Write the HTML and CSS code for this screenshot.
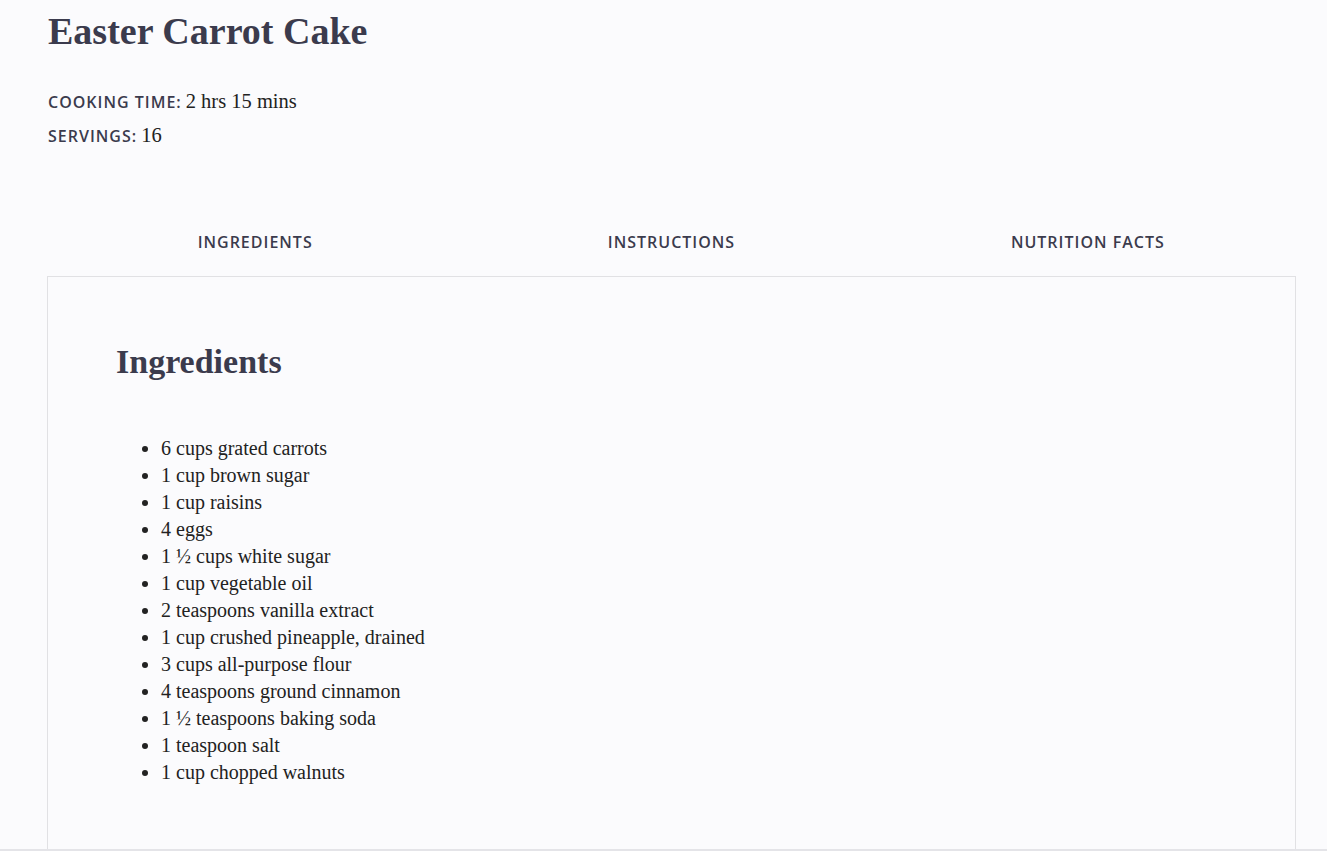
FILE: index.html
```html
<!DOCTYPE html>
<html lang="en">
<head>
<meta charset="utf-8">
<title>Easter Carrot Cake</title>
<link rel="stylesheet" href="styles.css">
</head>
<body>
<main class="recipe">
  <h1 class="recipe-title">Easter Carrot Cake</h1>
  <div class="meta">
    <p class="meta-row"><span class="meta-label">COOKING TIME:</span> <span class="meta-value">2 hrs 15 mins</span></p>
    <p class="meta-row"><span class="meta-label">SERVINGS:</span> <span class="meta-value">16</span></p>
  </div>
  <nav class="tabs">
    <div class="tab">INGREDIENTS</div>
    <div class="tab">INSTRUCTIONS</div>
    <div class="tab">NUTRITION FACTS</div>
  </nav>
  <section class="panel">
    <h2 class="panel-title">Ingredients</h2>
    <ul class="ingredients">
      <li>6 cups grated carrots</li>
      <li>1 cup brown sugar</li>
      <li>1 cup raisins</li>
      <li>4 eggs</li>
      <li>1 ½ cups white sugar</li>
      <li>1 cup vegetable oil</li>
      <li>2 teaspoons vanilla extract</li>
      <li>1 cup crushed pineapple, drained</li>
      <li>3 cups all-purpose flour</li>
      <li>4 teaspoons ground cinnamon</li>
      <li>1 ½ teaspoons baking soda</li>
      <li>1 teaspoon salt</li>
      <li>1 cup chopped walnuts</li>
    </ul>
  </section>
</main>
</body>
</html>
```

FILE: styles.css
```css
html, body {
  margin: 0;
  padding: 0;
  background: #fbfbfd;
}
body {
  color: #3b3b4d;
  font-family: "Liberation Serif", "Times New Roman", serif;
  overflow: hidden;
  height: 851px;
}
body::after {
  content: "";
  position: fixed;
  left: 0;
  right: 0;
  bottom: 0;
  height: 2px;
  background: #e4e4e8;
}
.recipe {
  width: 1249px;
  padding-left: 47px;
}
.recipe-title {
  margin: 0;
  padding-top: 8px;
  padding-left: 1px;
  font-family: "Liberation Serif", serif;
  font-size: 38px;
  font-weight: 700;
  line-height: 46px;
  color: #3b3b4d;
}
.meta {
  margin-top: 34px;
  padding-left: 1px;
}
.meta-row {
  margin: 0 0 8px;
  line-height: 26px;
}
.meta-row + .meta-row {
  margin-top: -2px;
}
.meta-label {
  font-family: "Open Sans", sans-serif;
  font-weight: 600;
  font-size: 16px;
  letter-spacing: 1px;
}
.meta-value {
  font-size: 20.5px;
  color: #222;
}
.tabs {
  display: grid;
  grid-template-columns: 1fr 1fr 1fr;
  margin-top: 71px;
}
.tab {
  text-align: center;
  font-family: "Open Sans", sans-serif;
  font-weight: 600;
  font-size: 16px;
  letter-spacing: 1px;
  line-height: 22px;
  padding: 10px 0 23px;
}
.panel {
  border: 1px solid #e1e1e4;
  border-bottom: none;
  padding: 59px 68px 66px;
  min-height: 520px;
}
.panel-title {
  margin: 0;
  font-family: "Liberation Serif", serif;
  font-weight: 700;
  font-size: 34px;
  line-height: 52px;
}
.ingredients {
  margin: 47px 0 0;
  padding-left: 45px;
  font-size: 20px;
  line-height: 27px;
  color: #222;
}
```
